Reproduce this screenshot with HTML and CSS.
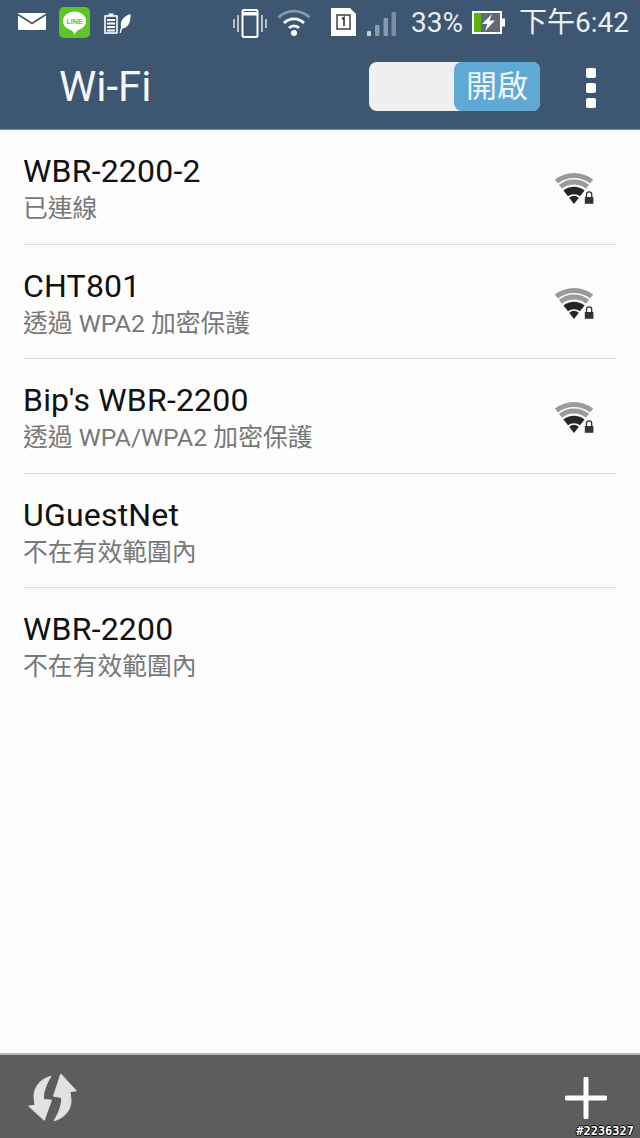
FILE: index.html
```html
<!DOCTYPE html>
<html lang="en">
<head>
  <meta charset="UTF-8" />
  <title>Wi-Fi</title>
  <link rel="stylesheet" href="styles.css">
</head>
<body>
  <svg class="defs" width="0" height="0">
    <symbol id="wifi-lock" viewBox="0 0 40 33">
      <path d="M2.4 9.5A28.5 28.5 0 0 1 37.6 9.5" fill="none" stroke="#9a9a9a" stroke-width="5"/>
      <path d="M6.5 14.7A22 22 0 0 1 33.5 14.7" fill="none" stroke="#9a9a9a" stroke-width="5"/>
      <path d="M11.7 21.4A13.5 13.5 0 0 1 28.3 21.4" fill="none" stroke="#262626" stroke-width="7.5"/>
      <path d="M20 32L15.1 25.7A8 8 0 0 1 24.9 25.7Z" fill="#262626"/>
      <path d="M32.5 25v-2.5a2.6 2.6 0 0 1 5.2 0V25" fill="none" stroke="#333" stroke-width="1.3"/>
      <rect x="30.8" y="25" width="8.6" height="6.8" fill="#333"/>
    </symbol>
  </svg>

  <div class="phone">
    <div class="statusbar">
      <div class="status-group">
        <svg class="ic-mail" width="28" height="17" viewBox="0 0 28 17">
          <rect width="28" height="17" rx="1" fill="#fff"/>
          <path d="M0 1.5L14 10.5L28 1.5" fill="none" stroke="#3d5672" stroke-width="1.6"/>
        </svg>
        <svg class="ic-line" width="31" height="31" viewBox="0 0 31 31">
          <rect width="31" height="31" rx="5" fill="#5cc623"/>
          <ellipse cx="15.5" cy="14" rx="11.5" ry="9.5" fill="#fff"/>
          <path d="M12 22l3.5 5.5 4-5.5z" fill="#fff"/>
          <text x="15.5" y="16.5" text-anchor="middle" class="line-label">LINE</text>
        </svg>
        <svg class="ic-eco" width="27" height="21" viewBox="0 0 27 21">
          <rect x="1" y="3" width="12" height="17" fill="none" stroke="#fff" stroke-width="1.6"/>
          <rect x="4.5" y="0.5" width="5" height="2.5" fill="#fff"/>
          <path d="M3 7h8M3 10.5h8M3 14h8M3 17.5h8" stroke="#fff" stroke-width="2"/>
          <path d="M26.5 1C19 3.5 16 8 17 14L15.5 20h1.3l1.4-4.5C24 15.5 27 9 26.5 1Z" fill="#fff"/>
        </svg>
      </div>
      <div class="status-group status-mid">
        <svg class="ic-vibrate" width="34" height="29" viewBox="0 0 34 29">
          <rect x="9.5" y="1" width="15" height="27" rx="1.5" fill="none" stroke="#fff" stroke-width="2"/>
          <rect x="10" y="3" width="14" height="3.5" fill="#fff"/>
          <path d="M5 6v17M1 10v9M29 6v17M33 10v9" stroke="#d4dae0" stroke-width="1.6"/>
        </svg>
        <svg class="ic-wifi" width="34" height="29" viewBox="0 0 34 29">
          <path d="M1.5 10.5A22 22 0 0 1 32.5 10.5" fill="none" stroke="#8a9aac" stroke-width="2.8"/>
          <path d="M7 16A14 14 0 0 1 27 16" fill="none" stroke="#fff" stroke-width="2.8"/>
          <path d="M12 21A7 7 0 0 1 22 21" fill="none" stroke="#fff" stroke-width="2.8"/>
          <circle cx="17" cy="26" r="3" fill="#fff"/>
        </svg>
      </div>
      <div class="status-group status-right">
        <svg class="ic-sim" width="25" height="28" viewBox="0 0 25 28">
          <path d="M0 0h19l6 6v22H0z" fill="#fff"/>
          <rect x="6" y="7" width="13" height="14" fill="none" stroke="#333" stroke-width="1.4"/>
          <path d="M11 11l2-1.5V18" fill="none" stroke="#333" stroke-width="1.6"/>
        </svg>
        <svg class="ic-signal" width="30" height="24" viewBox="0 0 30 24">
          <rect x="1" y="19" width="4" height="5" rx="1" fill="#c9d1da"/>
          <rect x="9" y="13" width="4.5" height="11" rx="1" fill="#8b9aac"/>
          <rect x="17.5" y="6" width="4.5" height="18" rx="1" fill="#8b9aac"/>
          <rect x="25.5" y="0" width="4.5" height="24" rx="1" fill="#7f8fa2"/>
        </svg>
        <span class="status-text status-pct">33%</span>
        <svg class="ic-battery" width="33" height="23" viewBox="0 0 33 23">
          <rect x="1" y="1" width="28" height="21" fill="#5f6a75" stroke="#fff" stroke-width="2"/>
          <rect x="2" y="2" width="7" height="19" fill="#58b30f"/>
          <rect x="29" y="7.5" width="4" height="8" fill="#fff"/>
          <path d="M20 3L10 13h5.5L13 20l10-10.500h-5.500z" fill="#fff"/>
        </svg>
        <span class="status-text status-time">下午6:42</span>
      </div>
    </div>

    <header class="appbar">
      <h1 class="title">Wi-Fi</h1>
      <div class="switch"><span class="switch-on">開啟</span></div>
      <div class="overflow"><i></i><i></i><i></i></div>
    </header>

    <ul class="network-list">
      <li class="network">
        <div class="network-text">
          <div class="network-name">WBR-2200-2</div>
          <div class="network-sub">已連線</div>
        </div>
        <svg class="signal" width="40" height="33"><use href="#wifi-lock"/></svg>
      </li>
      <li class="network">
        <div class="network-text">
          <div class="network-name">CHT801</div>
          <div class="network-sub">透過 WPA2 加密保護</div>
        </div>
        <svg class="signal" width="40" height="33"><use href="#wifi-lock"/></svg>
      </li>
      <li class="network">
        <div class="network-text">
          <div class="network-name">Bip's WBR-2200</div>
          <div class="network-sub">透過 WPA/WPA2 加密保護</div>
        </div>
        <svg class="signal" width="40" height="33"><use href="#wifi-lock"/></svg>
      </li>
      <li class="network">
        <div class="network-text">
          <div class="network-name">UGuestNet</div>
          <div class="network-sub">不在有效範圍內</div>
        </div>
      </li>
      <li class="network">
        <div class="network-text">
          <div class="network-name">WBR-2200</div>
          <div class="network-sub">不在有效範圍內</div>
        </div>
      </li>
    </ul>

    <footer class="actionbar">
      <svg class="ic-refresh" width="53" height="52" viewBox="80 85 160 155">
        <path d="M155 100C125 108 105 130 104 160L107 188L88 190L135 233L157 172L133 170C130 150 142 122 155 100Z" fill="#e2e2e2" stroke="#e2e2e2" stroke-width="3" stroke-linejoin="round"/>
        <path d="M165 234C195 226 215 204 216 174L213 146L232 144L185 93L163 160L187 164C190 184 178 212 165 234Z" fill="#e2e2e2" stroke="#e2e2e2" stroke-width="3" stroke-linejoin="round"/>
      </svg>
      <svg class="ic-add" width="42" height="42" viewBox="0 0 42 42">
        <path d="M21 2V40M2 21H40" stroke="#fff" stroke-width="5" stroke-linecap="round"/>
      </svg>
    </footer>

    <span class="watermark">#2236327</span>
  </div>
</body>
</html>
```

FILE: styles.css
```css
* { box-sizing: border-box; margin: 0; padding: 0; }
body {
  font-family: Roboto, "Noto Sans CJK TC", sans-serif;
  background: #fdfdfd;
}
.defs { position: absolute; }
.phone {
  position: relative;
  width: 640px;
  height: 1138px;
  display: flex;
  flex-direction: column;
  overflow: hidden;
}

/* status bar */
.statusbar {
  height: 46px;
  flex: none;
  background: #3d5672;
  display: flex;
  align-items: flex-start;
  color: #fff;
}
.status-group { display: flex; align-items: flex-start; }
.statusbar svg { display: block; flex: none; }
.ic-mail { margin: 13px 0 0 18px; }
.ic-line { margin: 7px 0 0 13px; }
.line-label { font: 700 7px "Liberation Sans", sans-serif; fill: #5cc623; }
.ic-eco { margin: 13px 0 0 14px; }
.status-mid { margin-left: 102px; }
.ic-vibrate { margin-top: 9px; }
.ic-wifi { margin: 7px 0 0 10px; }
.status-right { margin-left: 20px; }
.ic-sim { margin-top: 8px; }
.ic-signal { margin: 12px 0 0 10px; }
.status-text { font-size: 28px; line-height: 46px; white-space: nowrap; }
.status-pct { margin-left: 15px; color: #e8edf2; }
.ic-battery { margin: 11px 0 0 9px; }
.status-time { margin-left: 14px; color: #eef1f4; }

/* title row */
.appbar {
  height: 84px;
  flex: none;
  background: #3d5672;
  border-bottom: 1px solid #7d8c9c;
  display: flex;
  align-items: flex-start;
}
.title {
  font-size: 42px;
  font-weight: 400;
  line-height: 50px;
  color: #f6f7f8;
  margin: 16px 0 0 59px;
  width: 310px;
}
.switch {
  width: 171px;
  height: 49px;
  margin-top: 16px;
  background: #efefef;
  border-radius: 8px;
  display: flex;
  justify-content: flex-end;
}
.switch-on {
  width: 86px;
  background: #5fa9d4;
  border-radius: 8px;
  color: #eef6fb;
  font-size: 31px;
  line-height: 49px;
  text-align: center;
}
.overflow {
  margin: 22px 0 0 46px;
  display: flex;
  flex-direction: column;
  gap: 5px;
}
.overflow i {
  display: block;
  width: 10px;
  height: 10px;
  border-radius: 2px;
  background: #fff;
}

/* networks */
.network-list {
  list-style: none;
  flex: 1;
  padding: 0 23px;
}
.network {
  height: 114.5px;
  display: flex;
  justify-content: space-between;
  align-items: flex-start;
  border-bottom: 1px solid #dcdcdc;
}
.network:last-child { border-bottom: none; }
.network-name {
  font-size: 32px;
  letter-spacing: 0.2px;
  line-height: 40px;
  color: #111;
  margin-top: 21px;
}
.network-sub {
  font-size: 24.8px;
  line-height: 36px;
  color: #777;
}
.signal { margin: 42px 23px 0 0; flex: none; }

/* bottom bar */
.actionbar {
  height: 85px;
  flex: none;
  background: #5d5d5d;
  border-top: 2px solid #b8b8b8;
  display: flex;
  justify-content: space-between;
  align-items: flex-start;
  padding: 16px 33px 0 26px;
}
.ic-add { margin-top: 6px; }
.watermark {
  position: absolute;
  right: 6px;
  bottom: 0;
  font: 700 12px/14px "DejaVu Sans Mono", monospace;
  color: #fff;
  text-shadow: 1px 0 #000, -1px 0 #000, 0 1px #000, 0 -1px #000;
}
```
